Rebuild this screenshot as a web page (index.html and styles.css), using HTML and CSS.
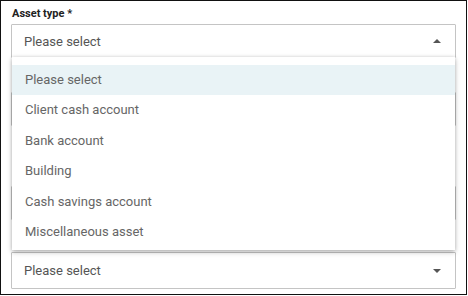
FILE: index.html
```html
<!DOCTYPE html>
<html>
<head>
<meta charset="utf-8">
<link rel="stylesheet" href="styles.css">
</head>
<body>
<div class="frame">
  <div class="field">
    <div class="label">Asset type *</div>
    <div class="select open">
      <span class="value">Please select</span>
      <span class="caret up"></span>
    </div>
  </div>
  <div class="field field-2">
    <div class="spacer"></div>
    <div class="select"></div>
  </div>
  <div class="field field-3">
    <div class="spacer"></div>
    <div class="select"></div>
  </div>
  <div class="field field-4">
    <div class="select last"><span class="value">Please select</span><span class="caret"></span></div>
  </div>

  <ul class="menu">
    <li class="item active">Please select</li>
    <li class="item">Client cash account</li>
    <li class="item">Bank account</li>
    <li class="item">Building</li>
    <li class="item">Cash savings account</li>
    <li class="item">Miscellaneous asset</li>
  </ul>
</div>
</body>
</html>
```

FILE: styles.css
```css
* { box-sizing: border-box; }
html, body { margin: 0; padding: 0; background: #fff; }
body {
  font-family: Roboto, "Liberation Sans", Arial, sans-serif;
  color: #666;
}
.frame {
  position: relative;
  width: 467px;
  height: 295px;
  border: 1px solid #111;
  padding: 6px 10px 0 10px;
  overflow: hidden;
}
.label {
  font-size: 11px;
  font-weight: 700;
  color: #222;
  height: 13px;
  line-height: 13px;
  margin-left: 1px;
  margin-bottom: 4px;
}
.spacer { height: 17px; }
.select {
  display: flex;
  align-items: center;
  justify-content: space-between;
  height: 34px;
  border: 1px solid #c4c4c4;
  border-radius: 1px;
  padding: 0 14px 0 12px;
  background: #fff;
}
.value {
  font-size: 13px;
  color: #555;
}
.caret {
  width: 0;
  height: 0;
  border-left: 4px solid transparent;
  border-right: 4px solid transparent;
  border-top: 4px solid #555;
}
.caret.up {
  border-top: none;
  border-bottom: 4px solid #555;
}
.field-2 { margin-top: 17px; }
.field-3 { margin-top: 43px; }
.field-4 { margin-top: 32px; }
.select.last { height: 37px; }

.menu {
  position: absolute;
  top: 56px;
  left: 11px;
  width: 443px;
  height: 193px;
  margin: 0;
  padding: 8px 0 0 0;
  list-style: none;
  background: #fff;
  box-shadow: 0 2px 5px rgba(0,0,0,0.28), 0 0 3px rgba(0,0,0,0.12);
}
.item {
  height: 30.4px;
  line-height: 30.4px;
  padding-left: 13px;
  font-size: 13px;
  color: #666;
}
.item.active { background: #e9f3f6; }
```
